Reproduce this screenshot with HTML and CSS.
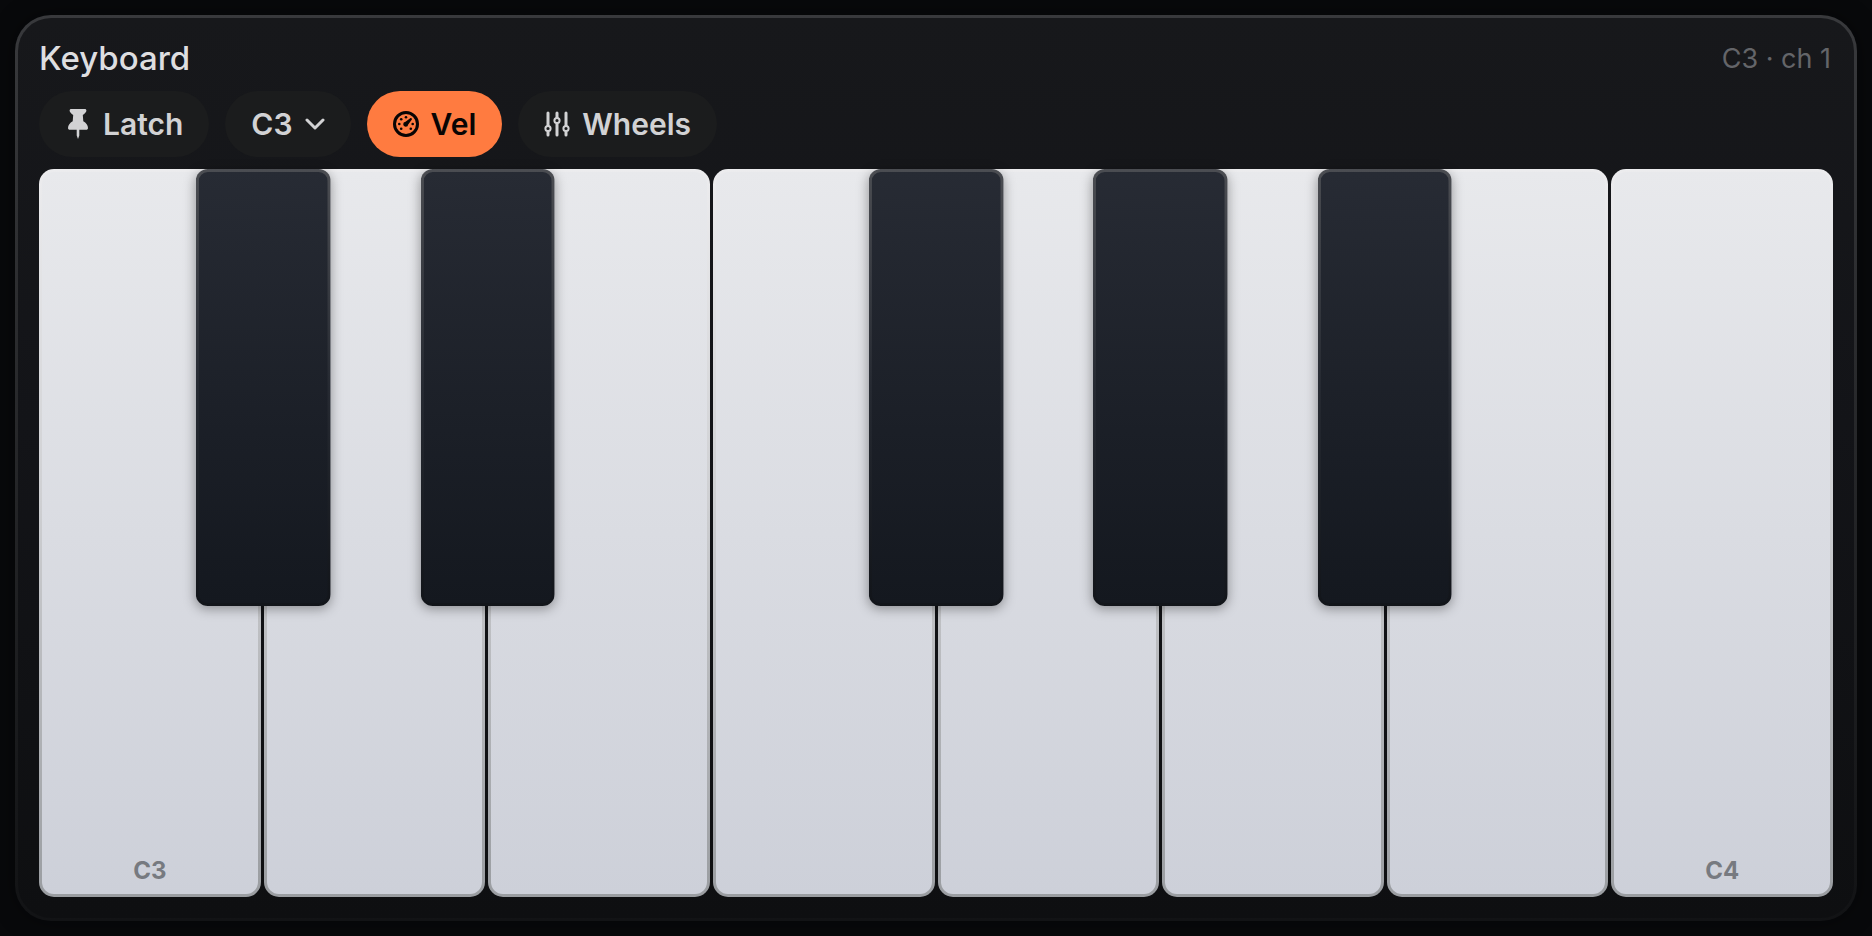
FILE: index.html
```
<!DOCTYPE html>
<html lang="en">
<head>
    <meta charset="UTF-8">
    <meta name="viewport" content="width=device-width, initial-scale=1.0">
    <title>Keyboard</title>
    <link rel="stylesheet" href="styles.css">
</head>
<body>
    <main class="panel">
        <!-- Title and current octave / channel -->
        <header class="panel-header">
            <h1>Keyboard</h1>
            <span class="status">C3 · ch 1</span>
        </header>

        <!-- Controls -->
        <div class="toolbar">
            <button class="pill" type="button" aria-pressed="false">
                <svg class="icon-pin" viewBox="0 0 20 30" aria-hidden="true">
                    <path d="M3.2 0h13.6c1 0 1.6.7 1.6 1.6 0 1.6-1.7 3.2-3.6 4.5l.5 6.1c2.8 1.6 4.7 4.2 4.7 6.8 0 1.1-.7 1.8-1.8 1.8h-6.9v5.6L10 30l-1.3-3.6v-5.6H1.8C.7 20.8 0 20.1 0 19c0-2.600 1.900-5.200 4.700-6.800l.5-6.100C3.300 4.800 1.600 3.200 1.600 1.600 1.600.7 2.200 0 3.200 0z"/>
                </svg>
                Latch
            </button>
            <button class="pill" type="button" aria-haspopup="listbox">
                C3
                <svg class="icon-chevron" viewBox="0 0 20 12" aria-hidden="true">
                    <path d="M2 2l8 8 8-8"/>
                </svg>
            </button>
            <button class="pill active" type="button" aria-pressed="true">
                <svg class="icon-gauge" viewBox="0 0 26 26" aria-hidden="true">
                    <circle class="ring" cx="13" cy="13" r="11.5"/>
                    <circle cx="13" cy="6.300" r="1.300"/>
                    <circle cx="8.200" cy="8.300" r="1.300"/>
                    <circle cx="6.300" cy="13" r="1.300"/>
                    <circle cx="19.700" cy="13" r="1.300"/>
                    <circle cx="8.200" cy="17.800" r="1.300"/>
                    <circle cx="17.800" cy="17.800" r="1.300"/>
                    <path d="M18.600 7.400c.5.5.4 1 .1 1.400l-3.500 4.700a2.500 2.500 0 1 1-2.700-2.700l4.700-3.500c.5-.3 1-.3 1.400.1z"/>
                </svg>
                Vel
            </button>
            <button class="pill" type="button" aria-pressed="false">
                <svg class="icon-sliders" viewBox="0 0 26 26" aria-hidden="true">
                    <path d="M4 2v12.500M4 20.500V24M13 2v4.500M13 12.500V24M22 2v12.500M22 20.500V24"/>
                    <circle cx="4" cy="17.500" r="2.600"/>
                    <circle cx="13" cy="9.500" r="2.600"/>
                    <circle cx="22" cy="17.500" r="2.600"/>
                </svg>
                Wheels
            </button>
        </div>

        <!-- Piano keys, C3 to C4 -->
        <div class="keys">
            <button class="key white" type="button">C3</button>
            <button class="key white" type="button" aria-label="D3"></button>
            <button class="key white" type="button" aria-label="E3"></button>
            <button class="key white" type="button" aria-label="F3"></button>
            <button class="key white" type="button" aria-label="G3"></button>
            <button class="key white" type="button" aria-label="A3"></button>
            <button class="key white" type="button" aria-label="B3"></button>
            <button class="key white" type="button">C4</button>
            <button class="key black cs" type="button" aria-label="C#3"></button>
            <button class="key black ds" type="button" aria-label="D#3"></button>
            <button class="key black fs" type="button" aria-label="F#3"></button>
            <button class="key black gs" type="button" aria-label="G#3"></button>
            <button class="key black as" type="button" aria-label="A#3"></button>
        </div>
    </main>
</body>
</html>
```
FILE: styles.css
```
* {
    box-sizing: border-box;
}
body {
    margin: 0;
    min-height: 100vh;
    padding: 15px;
    display: flex;
    background-color: #08090b;
    color: #dedee0;
    font-family: Inter, "Noto Sans", sans-serif;
}
/* Panel */
.panel {
    flex: 1;
    display: flex;
    flex-direction: column;
    padding: 21px;
    border: 3px solid transparent;
    border-radius: 36px;
    background:
        linear-gradient(#17181b, #131418 45%, #0e0f11) padding-box,
        linear-gradient(#38393c, #121315) border-box;
    box-shadow: 0 0 24px rgba(0, 0, 0, 0.4);
}
.panel-header {
    display: flex;
    justify-content: space-between;
    align-items: center;
    height: 38px;
    padding-right: 2px;
}
.panel-header h1 {
    margin: 0;
    font-size: 33px;
    font-weight: 500;
}
.status {
    color: #646569;
    font-size: 27px;
}
/* Controls */
.toolbar {
    display: flex;
    gap: 16px;
    margin: 14px 0 12px;
}
.pill {
    display: flex;
    align-items: center;
    gap: 12px;
    height: 66px;
    padding: 0 26px;
    border: none;
    border-radius: 33px;
    background-color: #1b1c1d;
    color: #d2d2d4;
    font-family: inherit;
    font-size: 30px;
    font-weight: 600;
    cursor: pointer;
}
.pill.active {
    background-color: #ff7b40;
    color: #090504;
}
.pill svg {
    fill: currentColor;
}
.icon-pin {
    width: 26px;
    height: 30px;
}
.pill .icon-chevron {
    width: 20px;
    height: 12px;
    fill: none;
    stroke: currentColor;
    stroke-width: 3;
    stroke-linecap: round;
    stroke-linejoin: round;
}
.icon-gauge,
.icon-sliders {
    width: 26px;
    height: 26px;
}
.icon-gauge .ring {
    fill: none;
    stroke: currentColor;
    stroke-width: 3;
}
.pill .icon-sliders {
    fill: none;
    stroke: currentColor;
    stroke-width: 3;
    stroke-linecap: round;
}
.icon-sliders circle {
    stroke-width: 2;
}
/* Keys */
.keys {
    position: relative;
    flex: 1;
    display: flex;
    gap: 3px;
}
.key {
    border: 3px solid transparent;
    font-family: inherit;
    cursor: pointer;
}
.white {
    flex: 1;
    display: flex;
    justify-content: center;
    align-items: flex-end;
    padding: 0 0 9px;
    border-radius: 15px;
    background:
        linear-gradient(#e8e9ec, #dadce2 50%, #cdd0d9) padding-box,
        linear-gradient(#ececee, #cfd0d3 45%, #9a9da1) border-box;
    color: #777a80;
    font-size: 24px;
    font-weight: 700;
}
/* Black keys sit over the gaps between white keys */
.black {
    position: absolute;
    top: 0;
    width: 7.5%;
    height: 60%;
    border-radius: 12px;
    background:
        linear-gradient(#272b34, #1b1f27 60%, #14181f) padding-box,
        linear-gradient(#4b4d52, #262a32 50%, #12151a) border-box;
    box-shadow: 0 3px 12px rgba(0, 0, 0, 0.35);
    transform: translateX(-50%);
}
.cs {
    left: 12.5%;
}
.ds {
    left: 25%;
}
.fs {
    left: 50%;
}
.gs {
    left: 62.5%;
}
.as {
    left: 75%;
}
```
